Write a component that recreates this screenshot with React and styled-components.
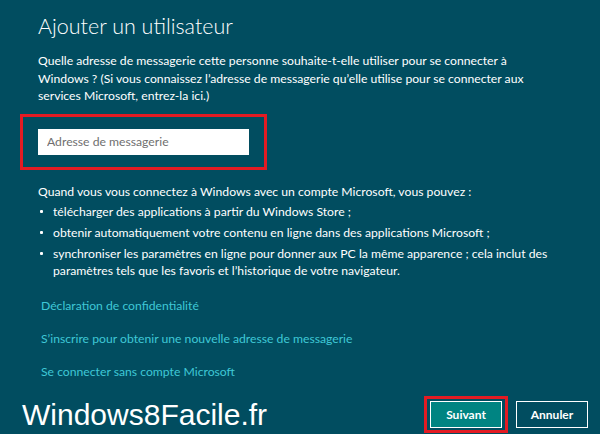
import React from 'react'
import styled, { createGlobalStyle } from 'styled-components'

const GlobalStyle = createGlobalStyle`
    html, body {
        margin: 0;
        padding: 0;
        background: #014d60;
    }
    body {
        font-family: Lato, "Open Sans", sans-serif;
        color: #ffffff;
    }
`

const bullets = [
    ['télécharger des applications à partir du Windows Store ;'],
    ['obtenir automatiquement votre contenu en ligne dans des applications Microsoft ;'],
    [
        'synchroniser les paramètres en ligne pour donner aux PC la même apparence ; cela inclut des',
        'paramètres tels que les favoris et l\u2019historique de votre navigateur.',
    ],
]

const links = [
    'Déclaration de confidentialité',
    'S\u2019inscrire pour obtenir une nouvelle adresse de messagerie',
    'Se connecter sans compte Microsoft',
]

function App() {
    return (
        <Page>
            <GlobalStyle />
            <Content>
                <Title>Ajouter un utilisateur</Title>
                <Intro>
                    Quelle adresse de messagerie cette personne souhaite-t-elle utiliser pour se connecter à<br />
                    Windows ? (Si vous connaissez l&#8217;adresse de messagerie qu&#8217;elle utilise pour se connecter aux<br />
                    services Microsoft, entrez-la ici.)
                </Intro>
                <Highlight>
                    <EmailInput placeholder="Adresse de messagerie" />
                </Highlight>
                <Lead>Quand vous vous connectez à Windows avec un compte Microsoft, vous pouvez :</Lead>
                <List>
                    {bullets.map((lines) => (
                        <Item key={lines[0]}>
                            {lines.map((l, i) => (
                                <React.Fragment key={l}>
                                    {i > 0 && <br />}
                                    {l}
                                </React.Fragment>
                            ))}
                        </Item>
                    ))}
                </List>
                <Links>
                    {links.map((l) => (
                        <LinkItem key={l} href="#">{l}</LinkItem>
                    ))}
                </Links>
            </Content>
            <Footer>
                <Watermark>Windows8Facile.fr</Watermark>
                <Buttons>
                    <Highlight $tight>
                        <Button $primary>Suivant</Button>
                    </Highlight>
                    <Button>Annuler</Button>
                </Buttons>
            </Footer>
        </Page>
    )
}

export default App

const Page = styled.div`
    width: 600px;
    height: 434px;
    display: flex;
    flex-direction: column;
    justify-content: space-between;
    overflow: hidden;
`

const Content = styled.div`
    padding: 11px 0 0 38px;
    display: flex;
    flex-direction: column;
`

const Title = styled.h1`
    margin: 0;
    font-size: 21.5px;
    line-height: 30px;
    font-weight: 300;
    white-space: nowrap;
`

const Intro = styled.p`
    margin: 11px 0 0;
    font-size: 12.2px;
    line-height: 17.5px;
    white-space: nowrap;
`

const Highlight = styled.div`
    align-self: flex-start;
    border: 3px solid #e31b23;
    padding: ${(p) => (p.$tight ? '2px 3px' : '12px 15px')};
    margin-left: ${(p) => (p.$tight ? '0' : '-18px')};
    margin-top: ${(p) => (p.$tight ? '0' : '9px')};
    display: flex;
`

const EmailInput = styled.input`
    width: 211px;
    height: 26px;
    box-sizing: border-box;
    border: none;
    outline: none;
    padding: 0 9px;
    font-family: inherit;
    font-size: 12.2px;
    background: #ffffff;
    color: #333;

    &::placeholder {
        color: #6f6f6f;
    }
`

const Lead = styled.p`
    margin: 13px 0 0;
    font-size: 12.2px;
    line-height: 17px;
    white-space: nowrap;
`

const List = styled.ul`
    margin: 3px 0 0;
    padding: 0;
    list-style: none;
`

const Item = styled.li`
    position: relative;
    padding-left: 15px;
    font-size: 12.2px;
    line-height: 17px;
    margin-bottom: 4px;
    white-space: nowrap;

    &::before {
        content: '';
        position: absolute;
        left: 2px;
        top: 7px;
        width: 3px;
        height: 3px;
        border-radius: 1px;
        background: #ffffff;
    }
`

const Links = styled.div`
    margin-top: 14px;
    padding-left: 3px;
    display: flex;
    flex-direction: column;
    gap: 16px;
`

const LinkItem = styled.a`
    color: #3fc8d6;
    text-decoration: none;
    font-size: 12.2px;
    line-height: 17px;
`

const Footer = styled.div`
    display: flex;
    align-items: center;
    justify-content: space-between;
    padding: 0 12px 1px 22px;
    height: 37px;
`

const Watermark = styled.div`
    font-family: "Liberation Sans", Arial, sans-serif;
    font-size: 30px;
    color: #ffffff;
`

const Buttons = styled.div`
    display: flex;
    align-items: center;
    gap: 8px;
`

const Button = styled.button`
    width: 72px;
    height: 27px;
    box-sizing: border-box;
    border: 1.5px solid #ffffff;
    background: ${(p) => (p.$primary ? '#008482' : '#014d60')};
    color: #ffffff;
    font-family: Lato, "Open Sans", sans-serif;
    font-weight: 700;
    font-size: 12px;
    padding: 0;
`
